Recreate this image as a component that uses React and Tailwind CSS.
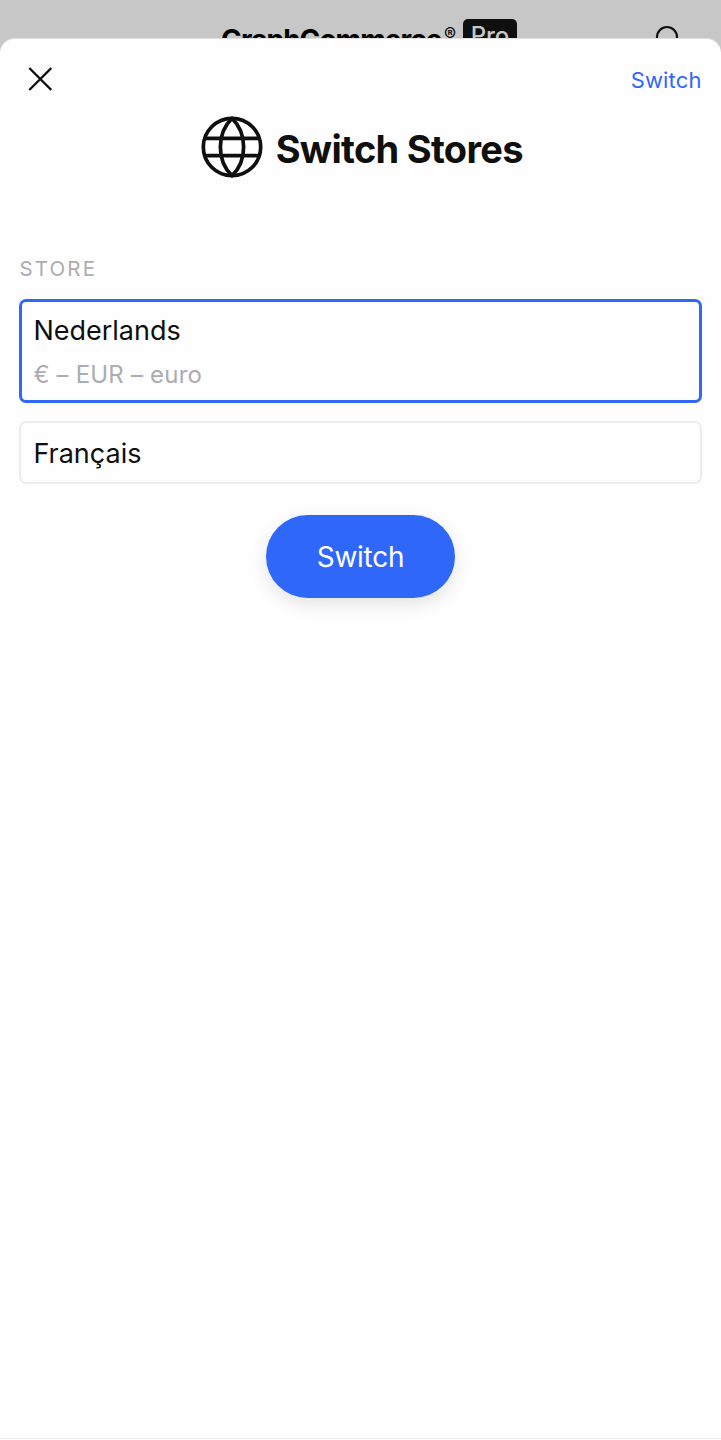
function CloseIcon() {
  return (
    <svg viewBox="0 0 24 24" className="size-6" fill="none" stroke="currentColor" strokeWidth="2.4">
      <path d="M1.300 1 23.300 23M23.300 1 1.300 23" />
    </svg>
  );
}

function GlobeIcon() {
  return (
    <svg viewBox="0 0 62 62" className="size-[62px] shrink-0" fill="none" stroke="currentColor" strokeWidth="3.7">
      <circle cx="31" cy="31" r="28.7" />
      <path d="M31 2.300C15.500 17 15.500 45 31 59.700C46.500 45 46.500 17 31 2.300ZM4 22.300H58M4 39.700H58" strokeLinejoin="round" />
    </svg>
  );
}

function SiteHeader() {
  return (
    <header className="flex h-[38px] items-start overflow-hidden">
      <div className="ml-[221px] mt-[23px] w-[221px] text-[28px] leading-[34px] font-bold tracking-[-0.950px] whitespace-nowrap text-black">
        GraphCommerce
      </div>
      <span className="ml-[2px] mt-[26px] w-[14px] text-[18px] leading-[18px] font-normal text-black">®</span>
      <div className="ml-[5px] mt-[19px] h-[34px] w-[54px] shrink-0 rounded-[5px] bg-[#0f0f0f] text-center text-[24px] leading-[34px] font-medium text-[#c7c7c7]">
        Pro
      </div>
      <svg viewBox="0 0 28 28" className="ml-[138px] mt-[25px] size-7 shrink-0" fill="none" stroke="#0f0f0f" strokeWidth="2.200">
        <circle cx="12" cy="12" r="10" />
        <path d="m19 19 7 7" />
      </svg>
    </header>
  );
}

function StoreOption({ name, currency, selected }) {
  return (
    <button
      className={
        selected
          ? "flex h-[104px] w-full flex-col rounded-[7px] border-[3px] border-[#2f68f9] pt-[12px] pl-[11px] text-left"
          : "flex h-[63px] w-full flex-col rounded-[7px] border-2 border-[#ededed] pt-[14px] pl-[12px] text-left"
      }
    >
      <span className="text-[27px] leading-[34px] text-[#0f0f0f]">{name}</span>
      {currency && (
        <span className="mt-[11px] text-[24px] leading-[32px] tracking-[0.200px] text-[#acacb1]">{currency}</span>
      )}
    </button>
  );
}

export default function App() {
  return (
    <div className="flex h-[1440px] w-[721px] flex-col overflow-hidden bg-[#c7c7c7] font-['Inter','Liberation_Sans',sans-serif]">
      <SiteHeader />
      <main className="flex min-h-0 flex-1 flex-col rounded-t-[15px] border-t border-[#e0e0e0] bg-[#fefefe] px-[19.400px]">
        <div className="flex h-[77px] items-center justify-between pt-[3px]">
          <button aria-label="Close" className="ml-[8.600px] text-[#0f0f0f]">
            <CloseIcon />
          </button>
          <button className="pt-[2px] text-[22px] leading-[28px] tracking-[0.150px] text-[#2f68f9]">Switch</button>
        </div>
        <div className="flex items-center justify-center gap-[12.500px] pl-[3px] text-[#0f0f0f]">
          <GlobeIcon />
          <h1 className="pt-[3px] text-[38px] leading-[48px] font-[680] tracking-[-0.700px]">Switch Stores</h1>
        </div>
        <div className="mt-[77px] text-[20.500px] leading-[28px] tracking-[2.150px] text-[#acacb1]">STORE</div>
        <div className="mt-[16px] flex flex-col gap-[18px]">
          <StoreOption name="Nederlands" currency="€ – EUR – euro" selected />
          <StoreOption name="Français" />
        </div>
        <button className="mt-[30.500px] h-[83.500px] w-[189px] shrink-0 self-center rounded-full bg-[#2f68f9] pt-[2px] text-[28px] tracking-[-0.300px] text-white shadow-[0_6px_18px_rgba(0,0,0,0.11)]">
          Switch
        </button>
      </main>
      <div className="h-px bg-[#ebebeb]" />
      <div className="h-px bg-[#fefefe]" />
    </div>
  );
}
